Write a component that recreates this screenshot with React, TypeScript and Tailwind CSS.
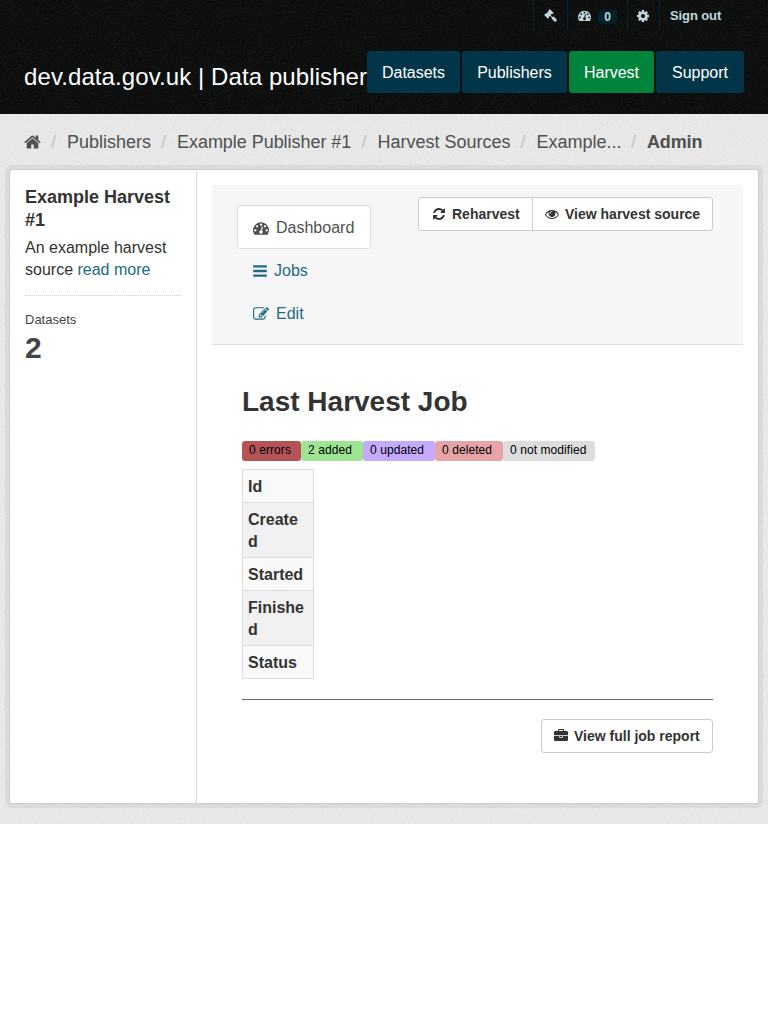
import type { ReactNode } from "react";

const paths = {
  home: "M1472 992v480q0 26-19 45t-45 19h-384v-384h-256v384h-384q-26 0-45-19t-19-45v-480q0-1 .5-3t.5-3l575-474 575 474q1 2 1 6zm223-69l-62 74q-8 9-21 11h-3q-13 0-21-7l-692-577-692 577q-12 8-24 7-13-2-21-11l-62-74q-8-10-7-23.5t11-21.5l719-599q32-26 76-26t76 26l244 204v-195q0-14 9-23t23-9h192q14 0 23 9t9 23v408l219 182q10 8 11 21.5t-7 23.5z",
  refresh: "M1639 1056q0 5-1 7-64 268-268 434.5t-478 166.5q-146 0-282.5-55t-243.5-157l-129 129q-19 19-45 19t-45-19-19-45v-448q0-26 19-45t45-19h448q26 0 45 19t19 45-19 45l-137 137q71 66 161 102t187 36q134 0 250-65t186-179q11-17 53-117 8-23 30-23h192q13 0 22.5 9.5t9.5 22.5zm25-800v448q0 26-19 45t-45 19h-448q-26 0-45-19t-19-45 19-45l138-138q-148-137-349-137-134 0-250 65t-186 179q-11 17-53 117-8 23-30 23h-199q-13 0-22.5-9.5t-9.5-22.5v-7q65-268 270-434.5t480-166.5q146 0 284 55.5t245 156.5l130-129q19-19 45-19t45 19 19 45z",
  eye: "M1664 960q-152-236-381-353 61 104 61 225 0 185-131.5 316.5t-316.5 131.5-316.5-131.5-131.5-316.5q0-121 61-225-229 117-381 353 133 205 333.5 326.5t434.5 121.5 434.5-121.5 333.5-326.5zm-720-384q0-20-14-34t-34-14q-125 0-214.5 89.5t-89.5 214.5q0 20 14 34t34 14 34-14 14-34q0-86 61-147t147-61q20 0 34-14t14-34zm848 384q0 34-20 69-140 230-376.5 368.5t-499.5 138.5-499.5-139-376.5-368q-20-35-20-69t20-69q140-229 376.5-368t499.5-139 499.5 139 376.5 368q20 35 20 69z",
  bars: "M1664 1344v128q0 26-19 45t-45 19h-1408q-26 0-45-19t-19-45v-128q0-26 19-45t45-19h1408q26 0 45 19t19 45zm0-512v128q0 26-19 45t-45 19h-1408q-26 0-45-19t-19-45v-128q0-26 19-45t45-19h1408q26 0 45 19t19 45zm0-512v128q0 26-19 45t-45 19h-1408q-26 0-45-19t-19-45v-128q0-26 19-45t45-19h1408q26 0 45 19t19 45z",
  edit: "M888 1184l116-116-152-152-116 116v56h96v96h56zm440-720q-16-16-33 1l-350 350q-17 17-1 33t33-1l350-350q17-17 1-33zm80 594v190q0 119-84.5 203.5t-203.5 84.5h-832q-119 0-203.5-84.5t-84.5-203.5v-832q0-119 84.5-203.5t203.5-84.5h832q63 0 117 25 15 7 18 23 3 17-9 29l-49 49q-14 14-32 8-23-6-45-6h-832q-66 0-113 47t-47 113v832q0 66 47 113t113 47h832q66 0 113-47t47-113v-126q0-13 9-22l64-64q15-15 35-7t20 29zm-96-738l288 288-672 672h-288v-288zm444 132l-92 92-288-288 92-92q28-28 68-28t68 28l152 152q28 28 28 68t-28 68z",
  briefcase: "M640 256h512v-128h-512v128zm1152 640v480q0 66-47 113t-113 47h-1472q-66 0-113-47t-47-113v-480h672v160q0 26 19 45t45 19h320q26 0 45-19t19-45v-160h672zm-768 0v128h-256v-128h256zm768-480v384h-1792v-384q0-66 47-113t113-47h352v-160q0-40 28-68t68-28h576q40 0 68 28t28 68v160h352q66 0 113 47t47 113z",
  cog: "M1152 896q0-106-75-181t-181-75-181 75-75 181 75 181 181 75 181-75 75-181zm512-109v222q0 12-8 23t-20 13l-185 28q-19 54-39 91 35 50 107 138 10 12 10 25t-9 23q-27 37-99 108t-94 71q-12 0-26-9l-138-108q-44 23-91 38-16 136-29 186-7 28-36 28h-222q-14 0-24.5-8.5t-11.5-21.5l-28-184q-49-16-90-37l-141 107q-10 9-25 9-14 0-25-11-126-114-165-168-7-10-7-23 0-12 8-23 15-21 51-66.5t54-70.5q-27-50-41-99l-183-27q-13-2-21-12.5t-8-23.5v-222q0-12 8-23t19-13l186-28q14-46 39-92-40-57-107-138-10-12-10-24 0-10 9-23 26-36 98.5-107.5t94.5-71.5q13 0 26 10l138 107q44-23 91-38 16-136 29-186 7-28 36-28h222q14 0 24.5 8.5t11.5 21.5l28 184q49 16 90 37l142-107q9-9 24-9 13 0 25 10 129 119 165 170 7 8 7 22 0 12-8 23-15 21-51 66.5t-54 70.5q26 50 41 98l183 28q13 2 21 12.5t8 23.5z",
  gavel: "M1771 1536q0 53-37 90l-107 108q-39 37-91 37-53 0-90-37l-363-364q-38-36-38-90 0-53 43-96l-256-256-126 126q-14 14-34 14t-34-14q2 2 12.5 12t12.5 13 10 11.5 10 13.5 6 13.5 5.5 16.5 1.5 18q0 38-28 68-3 3-16.5 18t-19 20.5-18.5 16.5-22 15.5-22 9-26 4.5q-40 0-68-28l-408-408q-28-28-28-68 0-13 4.5-26t9-22 15.5-22 16.5-18.5 20.5-19 18-16.5q30-28 68-28 10 0 18 1.5t16.5 5.5 13.5 6 13.5 10 11.5 10 13 12.5 12 12.5q-14-14-14-34t14-34l348-348q14-14 34-14t34 14q-2-2-12.5-12t-12.5-13-10-11.5-10-13.5-6-13.5-5.5-16.5-1.5-18q0-38 28-68 3-3 16.5-18t19-20.5 18.5-16.5 22-15.5 22-9 26-4.5q40 0 68 28l408 408q28 28 28 68 0 13-4.5 26t-9 22-15.5 22-16.5 18.5-20.5 19-18 16.5q-30 28-68 28-10 0-18-1.5t-16.5-5.5-13.5-6-13.5-10-11.5-10-13-12.5-12-12.5q14 14 14 34t-14 34l-126 126 256 256q43-43 96-43 52 0 91 37l363 363q37 39 37 91z",
  gauge: "M384 1152q0-53-37.5-90.5t-90.5-37.5-90.5 37.5-37.5 90.5 37.5 90.5 90.5 37.5 90.5-37.5 37.5-90.5zm192-448q0-53-37.5-90.5t-90.5-37.5-90.5 37.5-37.5 90.5 37.5 90.5 90.5 37.5 90.5-37.5 37.5-90.5zm428 481l101-382q6-26-7.5-48.5t-38.5-29.5-48 6.5-30 39.5l-101 382q-60 5-107 43.5t-63 98.5q-20 77 20 146t117 89 146-20 89-117q16-60-6-117t-72-91zm660-33q0-53-37.5-90.5t-90.5-37.5-90.5 37.5-37.5 90.5 37.5 90.5 90.5 37.5 90.5-37.5 37.5-90.5zm-640-640q0-53-37.5-90.5t-90.5-37.5-90.5 37.5-37.5 90.5 37.5 90.5 90.5 37.5 90.5-37.5 37.5-90.5zm448 192q0-53-37.5-90.5t-90.5-37.5-90.5 37.5-37.5 90.5 37.5 90.5 90.5 37.5 90.5-37.5 37.5-90.5zm320 448q0 261-141 483-19 29-54 29h-1402q-35 0-54-29-141-221-141-483 0-182 71-348t191-286 286-191 348-71 348 71 286 191 191 286 71 348z",
};

const boxes: Partial<Record<keyof typeof paths, string>> = {
  home: "64 0 1664 1792",
  cog: "128 0 1536 1792",
  refresh: "128 0 1536 1792",
  bars: "128 0 1536 1792",
};

function Icon({ name, className }: { name: keyof typeof paths; className: string }) {
  return (
    <svg viewBox={boxes[name] ?? "0 0 1792 1792"} className={`shrink-0 fill-current ${className}`} aria-hidden="true">
      <path d={paths[name]} />
    </svg>
  );
}

/* Fine grain laid over the flat header and page backgrounds */
function Grain({ id, className }: { id: string; className: string }) {
  return (
    <svg className={`pointer-events-none absolute inset-0 h-full w-full ${className}`} aria-hidden="true">
      <filter id={id}>
        <feTurbulence type="fractalNoise" baseFrequency="0.6" numOctaves="2" />
        <feColorMatrix values="0 0 0 0 1  0 0 0 0 1  0 0 0 0 1  2.4 0 0 0 -0.9" />
      </filter>
      <rect width="100%" height="100%" filter={`url(#${id})`} />
    </svg>
  );
}

function TopItem({ children, className }: { children: ReactNode; className: string }) {
  return <li className={`flex h-[31px] items-center border-l border-[#06222b] ${className}`}>{children}</li>;
}

const nav = [
  { label: "Datasets", style: "w-[93px] bg-[#023547]" },
  { label: "Publishers", style: "w-[105px] bg-[#023547]" },
  { label: "Harvest", style: "w-[85px] bg-[#00833b]" },
  { label: "Support", style: "w-[88px] bg-[#023547]" },
];

const crumbs = [
  { label: "Publishers", style: "w-[84px]" },
  { label: "Example Publisher #1", style: "w-[174.5px] tracking-[-0.04px]" },
  { label: "Harvest Sources", style: "w-[133px]" },
  { label: "Example...", style: "w-[84.5px]" },
  { label: "Admin", style: "w-[56px] font-bold tracking-[-0.15px]" },
];

const counts = [
  { label: "0 errors", style: "w-[59px] bg-[#b55457]" },
  { label: "2 added", style: "w-[62px] bg-[#9de592]" },
  { label: "0 updated", style: "w-[72px] bg-[#c5aaff]" },
  { label: "0 deleted", style: "w-[68px] bg-[#e7a4a6]" },
  { label: "0 not modified", style: "w-[92px] bg-[#dddddd]" },
];

export default function App() {
  return (
    <div className="min-h-screen bg-white font-['Liberation_Sans',Arial,sans-serif] text-base leading-[22px] text-[#333] antialiased">
      <header className="relative h-[114px] bg-[#0b0d0c]">
        <Grain id="grain-dark" className="opacity-[0.04]" />
        <div className="relative flex h-[31px] justify-end pr-[37px] text-[13px] font-bold text-[#c0d7dd]">
          <ul className="flex">
            <TopItem className="w-[34px] pl-[10px]"><Icon name="gavel" className="h-[13px] w-[13px]" /></TopItem>
            <TopItem className="w-[60px] pl-[10px]">
              <Icon name="gauge" className="h-[13px] w-[13px]" />
              <span className="ml-[7px] mt-[2px] flex h-[14px] w-[19px] items-center justify-center rounded bg-[#03212b] text-[12px]">0</span>
            </TopItem>
            <TopItem className="w-[32px] pl-[9px]"><Icon name="cog" className="h-[14px] w-[12px]" /></TopItem>
            <TopItem className="w-[72px] whitespace-nowrap pl-[10px]"><span className="tracking-[-0.1px]">Sign out</span></TopItem>
          </ul>
        </div>
        <div className="relative flex justify-between pl-6 pr-6 pt-5">
          <h1 className="w-[343px] whitespace-nowrap pt-[11px] text-[24px] leading-[30px] tracking-[0.09px] text-white">dev.data.gov.uk | Data publisher</h1>
          <nav className="flex gap-[2px] text-white">
            {nav.map((n) => (
              <a key={n.label} className={`flex h-[42px] items-center justify-center rounded-[3px] pt-[2px] ${n.style}`}>{n.label}</a>
            ))}
          </nav>
        </div>
      </header>

      <div className="relative h-[710px] bg-[#e5e5e5]">
        <Grain id="grain-light" className="opacity-25" />
        <div className="relative flex h-[55px] items-center pl-6 text-[18px] text-[#505050]">
          <Icon name="home" className="h-[18px] w-[17px]" />
          {crumbs.map((c) => (
            <div key={c.label} className="flex whitespace-nowrap">
              <span className="w-[26px] pl-[10px] text-[#c4c4c4]">/</span>
              <a className={c.style}>{c.label}</a>
            </div>
          ))}
        </div>

        <div className="relative mx-[9px] flex h-[635px] rounded-[3px] border border-[#ccc] bg-white shadow-[0_0_0_4px_rgba(0,0,0,0.05)]">
          <aside className="w-[187px] border-r border-[#ddd] px-[15px] pt-4">
            <h2 className="text-[18px] font-bold leading-[23px]">Example Harvest #1</h2>
            <p className="mt-[5px] whitespace-nowrap">An example harvest<br />source <a className="text-[#206b82]">read more</a></p>
            <dl className="mt-[14px] border-t border-dotted border-[#ccc] pt-[15px] text-[#444]">
              <dt className="text-[13px] leading-[18px]">Datasets</dt>
              <dd className="mt-1 text-[30px] font-bold leading-[30px]">2</dd>
            </dl>
          </aside>

          <main className="flex-1 px-[15px] pt-[15px]">
            <div className="flex h-[160px] items-start justify-between border-b border-[#ddd] bg-[#f6f6f6] pl-[25px] pr-[30px]">
              <ul className="pt-[20px] text-[#206b82]">
                <li className="flex h-[44px] w-[134px] items-center rounded-[3px] border border-[#ddd] bg-white pl-[15px] pt-px text-[#505050]"><Icon name="gauge" className="mr-[7px] h-4 w-4" />Dashboard</li>
                <li className="flex h-[43px] items-center pl-4"><Icon name="bars" className="mr-[7px] h-4 w-[14px]" />Jobs</li>
                <li className="flex h-[43px] items-center pl-4"><Icon name="edit" className="mr-[7px] h-4 w-4" />Edit</li>
              </ul>
              <div className="mt-[12px] flex h-[34px] rounded-[3px] border border-[#ccc] bg-white text-[14px] font-bold">
                <a className="flex w-[114px] items-center whitespace-nowrap border-r border-[#ccc] pl-[14px]"><Icon name="refresh" className="mr-[7px] h-[14px] w-[12px]" />Reharvest</a>
                <a className="flex w-[179px] items-center whitespace-nowrap pl-[12px]"><Icon name="eye" className="mr-[6px] h-[14px] w-[14px]" />View harvest source</a>
              </div>
            </div>

            <section className="px-[30px] pt-[39px]">
              <h1 className="text-[28px] font-bold leading-[36px]">Last Harvest Job</h1>
              <ul className="mt-[21px] flex text-[12px] leading-[18px] text-black">
                {counts.map((c) => (
                  <li key={c.label} className={`h-5 whitespace-nowrap rounded-[3px] pl-[7px] tracking-[0.08px] ${c.style}`}>{c.label}</li>
                ))}
              </ul>
              <table className="mt-2 w-[72px] table-fixed border-collapse text-left">
                <tbody>
                  {["Id", "Created", "Started", "Finished", "Status"].map((label) => (
                    <tr key={label} className="odd:bg-[#f9f9f9] even:bg-[#f1f1f1]">
                      <th className="border border-[#ddd] pb-1 pl-[5px] pr-[8px] pt-[6px] font-bold wrap-anywhere">{label}</th>
                    </tr>
                  ))}
                </tbody>
              </table>
              <hr className="mt-5 border-t border-[#6b6b6b]" />
              <div className="mt-[19px] flex justify-end">
                <a className="flex h-[34px] w-[172px] items-center whitespace-nowrap rounded-[3px] border border-[#ccc] pl-[12px] text-[14px] font-bold"><Icon name="briefcase" className="mr-[6px] h-[14px] w-[14px]" />View full job report</a>
              </div>
            </section>
          </main>
        </div>
      </div>
    </div>
  );
}
